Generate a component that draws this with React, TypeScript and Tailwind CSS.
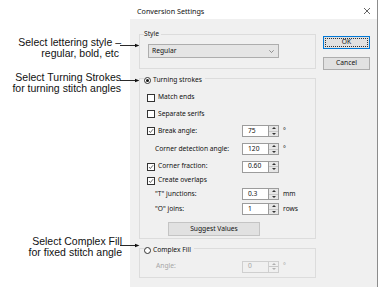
import React from "react";

const dlgFont = { fontFamily: '"Noto Sans", "Open Sans", sans-serif' };
const annFont = { fontFamily: '"Liberation Sans", Arial, sans-serif' };

function Arrow({ top }: { top: number }) {
  return (
    <svg
      className="absolute"
      style={{ left: 120, top }}
      width="20"
      height="5"
      viewBox="0 0 20 5"
    >
      <line x1="0" y1="2.5" x2="16" y2="2.5" stroke="#111" strokeWidth="0.9" />
      <polygon points="15,0.8 19.5,2.5 15,4.2" fill="#111" />
    </svg>
  );
}

function Check() {
  return (
    <svg width="8" height="8" viewBox="0 0 8 8" className="block">
      <polyline points="1.3,4 3.2,6 6.8,1.6" fill="none" stroke="#222" strokeWidth="0.9" />
    </svg>
  );
}

function Checkbox({ checked }: { checked?: boolean }) {
  return (
    <div className="w-[8px] h-[8px] border border-[#333] bg-white flex items-center justify-center shrink-0">
      {checked ? <Check /> : null}
    </div>
  );
}

function Radio({ checked }: { checked?: boolean }) {
  return (
    <div className="w-[7px] h-[7px] rounded-full border border-[#333] bg-white flex items-center justify-center shrink-0">
      {checked ? <div className="w-[3px] h-[3px] rounded-full bg-[#111]" /> : null}
    </div>
  );
}

function Spin({ value, disabled }: { value: string; disabled?: boolean }) {
  return (
    <div className="flex h-[12px] w-[37px] shrink-0">
      <div
        className={
          disabled
            ? "w-[27px] h-full border border-[#cfcfcf] bg-[#f0f0f0] text-[#a6a6a6] flex items-center pl-[5px]"
            : "w-[27px] h-full border border-[#9c9c9c] bg-white text-[#111] flex items-center pl-[5px]"
        }
      >
        {value}
      </div>
      <div
        className={
          disabled
            ? "w-[10px] h-full border-y border-r border-[#cfcfcf] bg-[#f0f0f0] flex flex-col"
            : "w-[10px] h-full border-y border-r border-[#9c9c9c] bg-[#e6e6e6] flex flex-col"
        }
      >
        <div className="flex-1 flex items-center justify-center border-b border-[#c8c8c8]">
          <svg width="4" height="2" viewBox="0 0 4 2">
            <polygon points="0,2 2,0 4,2" fill={disabled ? "#b0b0b0" : "#333"} />
          </svg>
        </div>
        <div className="flex-1 flex items-center justify-center">
          <svg width="4" height="2" viewBox="0 0 4 2">
            <polygon points="0,0 4,0 2,2" fill={disabled ? "#b0b0b0" : "#333"} />
          </svg>
        </div>
      </div>
    </div>
  );
}

function CheckRow({
  h,
  checked,
  label,
  value,
  unit,
}: {
  h: string;
  checked?: boolean;
  label: string;
  value?: string;
  unit?: string;
}) {
  return (
    <div className={`flex items-center ${h}`}>
      <div className="w-[102px] pl-[7px] flex items-center gap-[3px]">
        <Checkbox checked={checked} />
        <span>{label}</span>
      </div>
      {value !== undefined ? <Spin value={value} /> : null}
      {unit ? <span className="ml-[4px]">{unit}</span> : null}
    </div>
  );
}

function IndentRow({
  h,
  label,
  value,
  unit,
}: {
  h: string;
  label: string;
  value: string;
  unit: string;
}) {
  return (
    <div className={`flex items-center ${h}`}>
      <div className="w-[102px] pl-[15px]">{label}</div>
      <Spin value={value} />
      <span className="ml-[4px]">{unit}</span>
    </div>
  );
}

export default function App() {
  return (
    <div className="w-[389px] h-[302px] bg-white flex overflow-hidden">
      {/* annotations */}
      <div className="w-[130px] shrink-0 flex flex-col text-[10.5px] leading-[11px] text-[#111]" style={annFont}>
        <div className="relative mt-[37px] w-[121px] text-right">
          <div>Select lettering style –</div>
          <div className="pr-[2px]">regular, bold, etc</div>
          <Arrow top={6} />
        </div>
        <div className="relative mt-[13px] w-[121px] text-right">
          <div>Select Turning Strokes</div>
          <div>for turning stitch angles</div>
          <Arrow top={6} />
        </div>
        <div className="relative mt-[142px] w-[122px] text-right">
          <div>Select Complex Fill</div>
          <div>for fixed stitch angle</div>
          <Arrow top={7} />
        </div>
      </div>

      {/* dialog */}
      <div className="w-[248px] h-[287px] shrink-0 border-r border-[#8c8c8c] flex flex-col text-[6.7px] leading-none text-[#111]" style={dlgFont}>
        <div className="h-[19px] bg-white flex items-center justify-between pt-[4px] pl-[7px] pr-[6px]">
          <span className="text-[7.2px]">Conversion Settings</span>
          <svg width="8" height="8" viewBox="0 0 8 8" className="-mt-[2px]">
            <line x1="1" y1="1" x2="7" y2="7" stroke="#222" strokeWidth="0.7" />
            <line x1="7" y1="1" x2="1" y2="7" stroke="#222" strokeWidth="0.7" />
          </svg>
        </div>
        <div className="flex-1 bg-[#f0f0f0] flex pl-[9px]">
          {/* groups column */}
          <div className="w-[177px] flex flex-col">
            {/* Style */}
            <div className="relative mt-[15px] h-[35px] border border-[#dcdcdc]">
              <div className="absolute -top-[6px] left-[4px] h-[10px] flex items-center bg-[#f0f0f0] pr-[2px]">
                Style
              </div>
              <div className="mt-[9px] ml-[8px] w-[131px] h-[14px] border border-[#adadad] bg-[#e5e5e5] flex items-center justify-between pl-[3px] pr-[4px]">
                <span>Regular</span>
                <svg width="5" height="3" viewBox="0 0 5 3">
                  <polyline points="0.3,0.3 2.5,2.5 4.7,0.3" fill="none" stroke="#555" strokeWidth="0.6" />
                </svg>
              </div>
            </div>

            {/* Turning strokes */}
            <div className="relative mt-[9px] h-[161px] border border-[#dcdcdc] flex flex-col">
              <div className="absolute -top-[4px] left-[4px] h-[10px] flex items-center gap-[2px] bg-[#f0f0f0] pr-[3px]">
                <Radio checked />
                <span>Turning strokes</span>
              </div>
              <div className="mt-[10px]" />
              <CheckRow h="h-[17px]" label="Match ends" />
              <CheckRow h="h-[16px]" label="Separate serifs" />
              <CheckRow h="h-[18px]" checked label="Break angle:" value="75" unit="°" />
              <IndentRow h="h-[18px]" label="Corner detection angle:" value="120" unit="°" />
              <CheckRow h="h-[17px]" checked label="Corner fraction:" value="0.60" />
              <CheckRow h="h-[11px]" checked label="Create overlaps" />
              <IndentRow h="h-[16px]" label={'"T" junctions:'} value="0.3" unit="mm" />
              <IndentRow h="h-[14px]" label={'"O" joins:'} value="1" unit="rows" />
              <div className="mt-[6px] ml-[28px] w-[92px] h-[14px] border border-[#c4c4c4] bg-[#e1e1e1] flex items-center justify-center">
                Suggest Values
              </div>
            </div>

            {/* Complex Fill */}
            <div className="relative mt-[9px] h-[30px] border border-[#dcdcdc]">
              <div className="absolute -top-[4px] left-[4px] h-[10px] flex items-center gap-[2px] bg-[#f0f0f0] pr-[3px]">
                <Radio />
                <span>Complex Fill</span>
              </div>
              <div className="mt-[12px] h-[11px] flex items-center text-[#a6a6a6]">
                <div className="w-[102px] pl-[16px]">Angle:</div>
                <Spin value="0" disabled />
                <span className="ml-[4px]">°</span>
              </div>
            </div>
          </div>

          {/* buttons */}
          <div className="ml-[7px] w-[47px] flex flex-col">
            <div className="mt-[17px] h-[13px] border border-[#0078d7] bg-[#e1e1e1] p-[1px]">
              <div className="w-full h-full border border-dotted border-[#333] flex items-center justify-center">
                OK
              </div>
            </div>
            <div className="mt-[8px] h-[13px] border border-[#adadad] bg-[#e1e1e1] flex items-center justify-center">
              Cancel
            </div>
          </div>
        </div>
      </div>
    </div>
  );
}
